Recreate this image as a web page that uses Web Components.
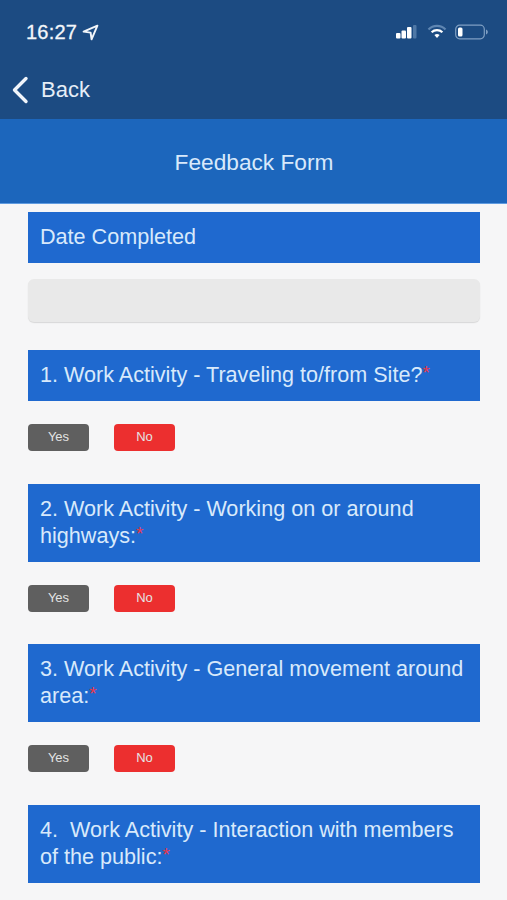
<!DOCTYPE html>
<html>
<head>
<meta charset="utf-8">
<style>
  html, body { margin: 0; padding: 0; }
  body { width: 507px; height: 900px; overflow: hidden; background: #f6f6f7; font-family: "Liberation Sans", Arial, sans-serif; }
</style>
</head>
<body>
<app-header title="Feedback Form"></app-header>
<form-body>
  <form-label style="--mb:16px">Date Completed</form-label>
  <form-input></form-input>
  <form-label req>1. Work Activity - Traveling to/from Site?</form-label>
  <yes-no></yes-no>
  <form-label req>2. Work Activity - Working on or around<br>highways:</form-label>
  <yes-no></yes-no>
  <form-label req>3. Work Activity - General movement around<br>area:</form-label>
  <yes-no></yes-no>
  <form-label req>4.&nbsp; Work Activity - Interaction with members<br>of the public:</form-label>
</form-body>

<script>
class AppHeader extends HTMLElement {
  constructor() {
    super();
    this.attachShadow({ mode: "open" });
  }
  connectedCallback() {
    this.shadowRoot.innerHTML = `
    <style>
      :host { display: block; color: #fff; font-family: "Liberation Sans", Arial, sans-serif; }
      .top { height: 119px; background: #1c4b82; box-sizing: border-box; padding: 20px 19px 0 26px; }
      .status { display: flex; align-items: center; height: 24px; }
      .time { font-size: 20px; letter-spacing: .2px; color: #f3f6fa; -webkit-text-stroke: .3px #f3f6fa; }
      .arrow { margin-left: 5px; }
      .right { margin-left: auto; display: flex; align-items: center; gap: 8px; }
      .back { display: flex; align-items: center; margin: 31px 0 0 -15px; height: 30px; }
      .back span { font-size: 22px; margin-left: 12px; color: #e6eef7; }
      .title { height: 85px; background: #1c66bc; border-bottom: 1px solid #5f9be0; box-sizing: border-box; display: flex; align-items: center; justify-content: center; font-size: 22.700px; color: #d8e9fb; padding-top: 2px; padding-left: 1px; }
    </style>
    <div class="top">
      <div class="status">
        <span class="time">16:27</span>
        <svg class="arrow" width="17" height="17" viewBox="0 0 16 16"><path d="M14.500 1.500 1.500 7.200l6.600.9.9 6.400z" fill="none" stroke="#f3f6fa" stroke-width="1.800" stroke-linejoin="round"/></svg>
        <div class="right">
          <svg width="24" height="16" viewBox="0 0 24 16"><g fill="#fff"><rect x="1" y="9" width="4.500" height="5.500" rx="1"/><rect x="6.500" y="6.500" width="4.500" height="8" rx="1"/><rect x="12" y="3" width="4.500" height="11.500" rx="1"/></g><rect x="18" y="1" width="3.500" height="13.500" rx="1" fill="#4f78a6"/></svg>
          <svg width="20" height="16" viewBox="0 0 20 16"><path d="M1.500 5.500a12 12 0 0 1 17 0" fill="none" stroke="#5f86b2" stroke-width="2.200"/><path d="M4.600 8.300a8 8 0 0 1 10.800 0" fill="none" stroke="#fff" stroke-width="2.200"/><path d="M7.400 11a4 4 0 0 1 5.200 0L10 14z" fill="#fff"/></svg>
          <svg width="33" height="16" viewBox="0 0 33 16"><rect x=".7" y="1.200" width="28.600" height="13.600" rx="4" fill="none" stroke="#7f9fc3" stroke-width="1.200"/><rect x="3" y="3.500" width="4.500" height="9" rx="1.500" fill="#fff"/><path d="M31 5.500c1.200.4 1.800 1.400 1.800 2.500s-.6 2.100-1.800 2.500z" fill="#7f9fc3"/></svg>
        </div>
      </div>
      <div class="back">
        <svg width="18" height="28" viewBox="0 0 18 28"><path d="M15 2.500 3.500 14 15 25.500" fill="none" stroke="#f0f5fb" stroke-width="3.400" stroke-linecap="round" stroke-linejoin="round"/></svg>
        <span>Back</span>
      </div>
    </div>
    <div class="title">${this.getAttribute("title")}</div>
  `;
  }
}
customElements.define("app-header", AppHeader);

class FormBody extends HTMLElement {
  constructor() {
    super();
    this.attachShadow({ mode: "open" }).innerHTML = `
    <style>
      :host { display: block; padding: 8px 27px 0 28px; }
    </style>
    <slot></slot>
  `;
  }
}
customElements.define("form-body", FormBody);

class FormLabel extends HTMLElement {
  constructor() {
    super();
    this.attachShadow({ mode: "open" });
  }
  connectedCallback() {
    const star = this.hasAttribute("req") ? `<i>*</i>` : "";
    this.shadowRoot.innerHTML = `
    <style>
      :host { display: block; margin-bottom: var(--mb, 23px); }
      div { background: #1f69cf; color: #d8e9fb; font: 21.600px/27px "Liberation Sans", Arial, sans-serif; padding: 11px 12px 13px; }
      i { font-style: normal; font-size: 19px; line-height: 0; vertical-align: 3px; color: #e8384a; }
    </style>
    <div><slot></slot>${star}</div>
  `;
  }
}
customElements.define("form-label", FormLabel);

class FormInput extends HTMLElement {
  constructor() {
    super();
    this.attachShadow({ mode: "open" }).innerHTML = `
    <style>
      :host { display: block; height: 43px; margin-bottom: 28px; background: #e9e9e9; border-radius: 6px; box-shadow: 0 1px 1px #d8d8d8; }
    </style>
  `;
  }
}
customElements.define("form-input", FormInput);

class YesNo extends HTMLElement {
  constructor() {
    super();
    this.attachShadow({ mode: "open" }).innerHTML = `
    <style>
      :host { display: flex; gap: 25px; margin-bottom: 32.500px; }
      span { width: 61px; height: 27px; border-radius: 4px; color: #e4e4e4; font: 13px/25px "Liberation Sans", Arial, sans-serif; text-align: center; background: #5f5f5f; }
      .no { background: #ec2f2f; }
    </style>
    <span>Yes</span><span class="no">No</span>
  `;
  }
}
customElements.define("yes-no", YesNo);
</script>
</body>
</html>
